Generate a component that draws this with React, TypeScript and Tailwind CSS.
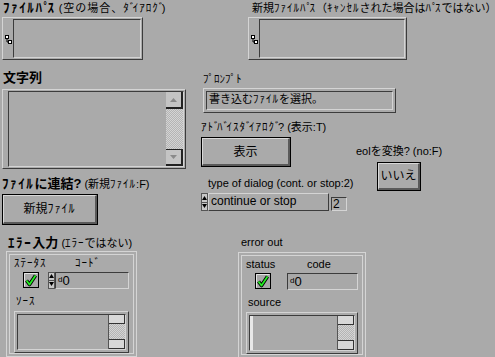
import React from "react";

// LabVIEW style front panel: controls sit on a free canvas, so the top level uses absolute placement.

// half-width katakana in the old bitmap font are wider than Noto's, dakuten narrower
const J: React.FC<{ t: string; bold?: boolean }> = ({ t, bold }) => (
  <>
    {t.split(/([\uFF61-\uFF9D]+|[\uFF9E\uFF9F])/).map((part, i) => {
      if (!part) return null;
      if (/^[\uFF9E\uFF9F]$/.test(part)) return <span key={i} className="tracking-[-2.5px]">{part}</span>;
      if (/^[\uFF61-\uFF9D]+$/.test(part))
        return (
          <span key={i} className={bold ? "tracking-[1.6px]" : "tracking-[1px]"}>
            {part}
          </span>
        );
      return <React.Fragment key={i}>{part}</React.Fragment>;
    })}
  </>
);

const Raised: React.FC<{ className?: string; children?: React.ReactNode }> = ({ className = "", children }) => (
  <div className={`border border-t-[#d4d4d4] border-l-[#d4d4d4] border-r-[#3c3c3c] border-b-[#3c3c3c] ${className}`}>
    {children}
  </div>
);

const Sunken: React.FC<{ className?: string; children?: React.ReactNode }> = ({ className = "", children }) => (
  <div className={`border border-t-[#3c3c3c] border-l-[#3c3c3c] border-r-[#d4d4d4] border-b-[#d4d4d4] ${className}`}>
    {children}
  </div>
);

const PathIcon = () => (
  <svg width="7" height="10" viewBox="0 0 7 10" className="shrink-0">
    <rect x="0.5" y="0.5" width="3" height="3" fill="#fff" stroke="#000" />
    <rect x="3.5" y="5.5" width="3" height="3" fill="#fff" stroke="#000" />
    <path d="M2 4v3h1.5" stroke="#000" fill="none" />
  </svg>
);

const PathControl: React.FC<{ className: string }> = ({ className }) => (
  <Raised className={`absolute flex p-px ${className}`}>
    <div className="flex w-[9px] items-center justify-center pt-[3px]">
      <PathIcon />
    </div>
    <Sunken className="flex-1" />
  </Raised>
);

const Btn: React.FC<{ className: string; label: string }> = ({ className, label }) => (
  <div className={`absolute border border-black ${className}`}>
    <div className="flex h-full items-center justify-center border-t border-l border-t-[#d8d8d8] border-l-[#d8d8d8] border-r-2 border-b-2 border-r-[#5a5a5a] border-b-[#5a5a5a] text-[12px] text-black">
      <J t={label} />
    </div>
  </div>
);

const Dither = "bg-[repeating-conic-gradient(#d4d4d4_0_25%,#b4b4b4_0_50%)] bg-[length:2px_2px]";

const Check = () => (
  <svg width="16" height="16" viewBox="0 0 16 16">
    <rect x="0.5" y="0.5" width="15" height="15" fill="#a8a8a8" stroke="#000" />
    <path d="M1.5 14.5v-13h13" stroke="#e4e4e4" fill="none" />
    <path d="M3.5 8.5l3 4 6-9" stroke="#000" strokeWidth="3.6" fill="none" strokeLinejoin="round" />
    <path d="M3.5 8.5l3 4 6-9" stroke="#22ee22" strokeWidth="1.8" fill="none" strokeLinejoin="round" />
  </svg>
);

const Arrows: React.FC<{ className?: string }> = ({ className = "" }) => (
  <div className={`flex w-[7px] flex-col border border-[#555] bg-[#c8c8c8] ${className}`}>
    <div className="flex flex-1 items-center justify-center border-b border-[#555]">
      <svg width="5" height="4" viewBox="0 0 5 4"><path d="M2.5 0L5 4H0z" fill="#000" /></svg>
    </div>
    <div className="flex flex-1 items-center justify-center">
      <svg width="5" height="4" viewBox="0 0 5 4"><path d="M0 0h5L2.5 4z" fill="#000" /></svg>
    </div>
  </div>
);

const SmallScroll = () => (
  <div className="flex w-[17px] flex-col border-l border-[#555]">
    <div className="h-[9px] border-b border-r border-[#333] bg-[#d8d8d8]" />
    <div className={`flex-1 ${Dither}`} />
    <div className="h-[10px] border-t border-b border-r border-[#333] bg-[#d8d8d8]" />
  </div>
);

const ErrorCluster: React.FC<{
  className: string;
  status: string;
  code: string;
  source: string;
  arrows?: boolean;
  bar?: boolean;
}> = ({ className, status, code, source, arrows, bar }) => (
  <div className={`absolute border border-[#d4d4d4] p-[2px] ${className}`}>
    <div className="flex h-full flex-col border border-[#d4d4d4] px-[4px]">
      <div className="flex h-[15px] items-end text-[11px] leading-[13px]">
        <span className="w-[61px]">
          <J t={status} />
        </span>
        <span>
          <J t={code} />
        </span>
      </div>
      <div className="mt-[2px] flex h-[17px] items-center">
        <div className="ml-[9px] w-[25px]">
          <Check />
        </div>
        {arrows ? <Arrows className="h-[17px]" /> : <div className="w-[7px]" />}
        <Sunken className="flex h-[17px] flex-1 items-center bg-[#a8a8a8]">
          <span className="ml-[2px] text-[8px] leading-none">d</span>
          <span className="text-[13px] leading-none">0</span>
        </Sunken>
      </div>
      <div className="mt-[6px] ml-[2px] h-[14px] text-[11px] leading-[13px]">
        <J t={source} />
      </div>
      <Raised className="mt-[2px] flex h-[43px] p-[2px]">
        <Sunken className="flex flex-1 justify-between">
          {bar ? <div className="w-[3px] bg-[#e8e8e8]" /> : <div />}
          <SmallScroll />
        </Sunken>
      </Raised>
    </div>
  </div>
);

export default function App() {
  return (
    <div className="relative h-[357px] w-[495px] overflow-hidden bg-[#aaaaaa] font-['Liberation_Sans','Noto_Sans_CJK_JP',sans-serif] text-black">
      {/* row 1 */}
      <div className="absolute left-[3px] top-[1px] whitespace-nowrap text-[11px] leading-[14px]">
        <span className="text-[13px] font-bold tracking-[0.6px]">
          <J t="ﾌｧｲﾙﾊﾟｽ" bold />
        </span>{" "}
        <span className="tracking-[1px]">
          <J t="(空の場合、ﾀﾞｲｱﾛｸﾞ)" />
        </span>
      </div>
      <PathControl className="left-[2px] top-[17px] h-[43px] w-[141px]" />

      <div className="absolute left-[252px] top-[1px] whitespace-nowrap text-[11px] leading-[14px]">
        <J t="新規ﾌｧｲﾙﾊﾟｽ（ｷｬﾝｾﾙされた場合はﾊﾟｽではない）" />
      </div>
      <PathControl className="left-[248px] top-[17px] h-[43px] w-[159px]" />

      {/* string */}
      <div className="absolute left-[3px] top-[69px] text-[13px] font-bold leading-[18px]">文字列</div>
      <Raised className="absolute left-[2px] top-[89px] flex h-[80px] w-[184px] py-px pr-px pl-[5px]">
        <Sunken className="flex flex-1 justify-end">
          <div className="flex w-[17px] flex-col">
            <div className="flex h-[17px] items-center justify-center border-r-2 border-b-2 border-[#222] bg-[#c4c4c4]">
              <svg width="7" height="4" viewBox="0 0 7 4"><path d="M3.5 0L7 4H0z" fill="#8a8a8a" /></svg>
            </div>
            <div className={`flex-1 ${Dither}`} />
            <div className="flex h-[17px] items-center justify-center border-r-2 border-b-2 border-t border-[#222] bg-[#c4c4c4]">
              <svg width="7" height="4" viewBox="0 0 7 4"><path d="M0 0h7L3.5 4z" fill="#8a8a8a" /></svg>
            </div>
          </div>
        </Sunken>
      </Raised>

      {/* prompt */}
      <div className="absolute left-[203px] top-[73px] text-[11px] leading-[13px]">ﾌﾟﾛﾝﾌﾟﾄ</div>
      <Raised className="absolute left-[203px] top-[88px] flex h-[25px] w-[193px] p-[2px]">
        <Sunken className="flex-1 pl-[2px] text-[11px] leading-[14px]">
          <J t="書き込むﾌｧｲﾙを選択。" />
        </Sunken>
      </Raised>

      <div className="absolute left-[201px] top-[121px] whitespace-nowrap text-[11px] leading-[13px]">
        <J t="ｱﾄﾞﾊﾞｲｽﾀﾞｲｱﾛｸﾞ? (表示:T)" />
      </div>
      <Btn className="left-[201px] top-[137px] h-[30px] w-[90px]" label="表示" />

      <div className="absolute left-[356px] top-[145px] whitespace-nowrap text-[11px] leading-[13px]">eolを変換? (no:F)</div>
      <Btn className="left-[377px] top-[162px] h-[29px] w-[44px]" label="いいえ" />

      {/* append */}
      <div className="absolute left-[2px] top-[176px] whitespace-nowrap text-[11px] leading-[16px]">
        <span className="text-[13px] font-bold">
          <J t="ﾌｧｲﾙに連結?" bold />
        </span>{" "}
        <J t="(新規ﾌｧｲﾙ:F)" />
      </div>
      <Btn className="left-[2px] top-[194px] h-[31px] w-[96px]" label="新規ﾌｧｲﾙ" />

      {/* ring */}
      <div className="absolute left-[208px] top-[177px] whitespace-nowrap text-[11px] leading-[13px]">type of dialog (cont. or stop:2)</div>
      <div className="absolute left-[201px] top-[193px] flex h-[18px] items-start">
        <Arrows className="h-[18px]" />
        <Raised className="h-[18px] w-[121px] pl-[2px] text-[12px] leading-[15px]">continue or stop</Raised>
        <Sunken className="mt-[4px] ml-[2px] h-[14px] w-[16px] pl-px text-[12px] leading-[12px]">2</Sunken>
      </div>

      {/* error in */}
      <div className="absolute left-[8px] top-[235px] whitespace-nowrap text-[11px] leading-[16px]">
        <span className="text-[13px] font-bold">
          <J t="ｴﾗｰ入力" bold />
        </span>{" "}
        <J t="(ｴﾗｰではない)" />
      </div>
      <ErrorCluster className="left-[6px] top-[251px] h-[106px] w-[131px]" status="ｽﾃｰﾀｽ" code="ｺｰﾄﾞ" source="ｿｰｽ" arrows />

      {/* error out */}
      <div className="absolute left-[241px] top-[236px] text-[11px] leading-[13px]">error out</div>
      <ErrorCluster className="left-[238px] top-[252px] h-[106px] w-[128px]" status="status" code="code" source="source" bar />
    </div>
  );
}
